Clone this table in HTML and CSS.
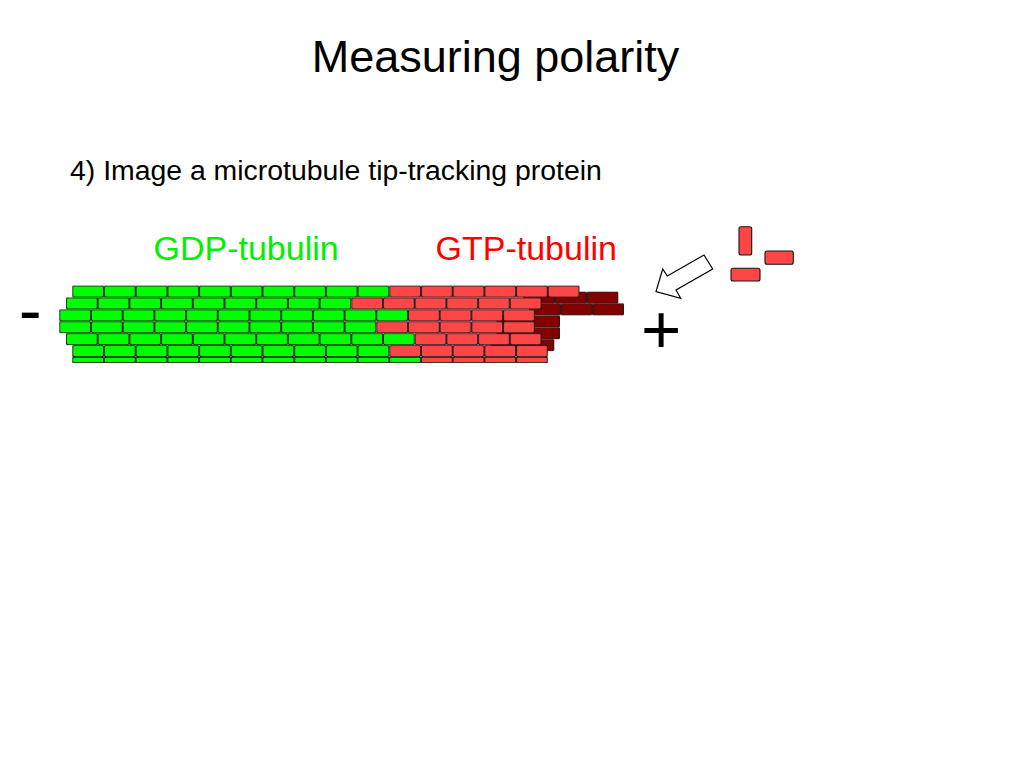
FILE: index.html
```html
<!DOCTYPE html>
<html lang="en">
<head>
<meta charset="utf-8">
<title>Measuring polarity</title>
<link rel="stylesheet" href="styles.css">
</head>
<body>
<main class="slide">
  <h1 class="title">Measuring polarity</h1>
  <p class="point">4) Image a microtubule tip-tracking protein</p>
  <svg class="diagram" width="1024" height="180" viewBox="0 200 1024 180" xmlns="http://www.w3.org/2000/svg">
    <defs>
      <pattern id="pg" patternUnits="userSpaceOnUse" width="31.7" height="11.9">
        <rect class="brick brick-gdp" x="0.3" y="0.3" width="31.1" height="11.3" rx="2"/>
      </pattern>
      <pattern id="pr" patternUnits="userSpaceOnUse" width="31.7" height="11.9">
        <rect class="brick brick-gtp" x="0.3" y="0.3" width="31.1" height="11.3" rx="2"/>
      </pattern>
      <pattern id="pd" patternUnits="userSpaceOnUse" width="31.7" height="11.9">
        <rect class="brick brick-back" x="0.3" y="0.3" width="31.1" height="11.3" rx="2"/>
      </pattern>
      <pattern id="pg6" patternUnits="userSpaceOnUse" width="31.7" height="6">
        <rect class="brick brick-gdp" x="0.3" y="0.3" width="31.1" height="5.4" rx="1.5"/>
      </pattern>
      <pattern id="pr6" patternUnits="userSpaceOnUse" width="31.7" height="6">
        <rect class="brick brick-gtp" x="0.3" y="0.3" width="31.1" height="5.4" rx="1.5"/>
      </pattern>
    </defs>

    <text class="label label-gdp" x="153.5" y="260">GDP-tubulin</text>
    <text class="label label-gtp" x="435.5" y="260">GTP-tubulin</text>
    <text class="end" x="18.7" y="334">-</text>
    <text class="end" x="641.1" y="353">+</text>

    <!-- back (dark) rows of the GTP cap -->
    <g transform="translate(523.2,291.7)"><rect fill="url(#pd)" width="95.1" height="11.9"/></g>
    <g transform="translate(528.9,303.4)"><rect fill="url(#pd)" width="95.1" height="11.9"/></g>
    <g transform="translate(496.6,315.4)"><rect fill="url(#pd)" width="63.4" height="11.9"/></g>
    <g transform="translate(496.6,327.3)"><rect fill="url(#pd)" width="63.4" height="11.9"/></g>
    <g transform="translate(490.9,339.2)"><rect fill="url(#pd)" width="63.4" height="11.9"/></g>

    <!-- front rows -->
    <g transform="translate(72.3,285.6)"><rect fill="url(#pg)" width="317" height="11.9"/><rect fill="url(#pr)" x="317" width="190.2" height="11.9"/></g>
    <g transform="translate(66,297.5)"><rect fill="url(#pg)" width="285.3" height="11.9"/><rect fill="url(#pr)" x="285.3" width="190.2" height="11.9"/></g>
    <g transform="translate(59.3,309.4)"><rect fill="url(#pg)" width="348.7" height="11.9"/><rect fill="url(#pr)" x="348.7" width="126.8" height="11.9"/></g>
    <g transform="translate(59.3,321.3)"><rect fill="url(#pg)" width="317" height="11.9"/><rect fill="url(#pr)" x="317" width="158.5" height="11.9"/></g>
    <g transform="translate(66,333.2)"><rect fill="url(#pg)" width="348.7" height="11.9"/><rect fill="url(#pr)" x="348.7" width="126.8" height="11.9"/></g>
    <g transform="translate(72.3,345.1)"><rect fill="url(#pg)" width="317" height="11.9"/><rect fill="url(#pr)" x="317" width="158.5" height="11.9"/></g>
    <g transform="translate(72.3,357)"><rect fill="url(#pg6)" width="348.7" height="6"/><rect fill="url(#pr6)" x="348.7" width="126.8" height="6"/></g>

    <!-- incoming arrow -->
    <polygon class="arrow" points="656,291.7 662.7,269 667.3,276 704,255 712.7,269 676,290 680.7,298.3"/>

    <!-- free GTP-tubulin dimers -->
    <rect class="brick brick-gtp" x="739" y="226.7" width="12.7" height="28.3" rx="2"/>
    <rect class="brick brick-gtp" x="765" y="251" width="28.3" height="13.3" rx="2"/>
    <rect class="brick brick-gtp" x="731" y="268.3" width="29" height="12.7" rx="2"/>
  </svg>
</main>
</body>
</html>
```

FILE: styles.css
```css
html, body {
  margin: 0;
  padding: 0;
  background: #ffffff;
}

body {
  font-family: "Liberation Sans", Arial, sans-serif;
  color: #000000;
}

.slide {
  width: 1024px;
  height: 768px;
  box-sizing: border-box;
  padding-top: 31px;
  overflow: hidden;
}

.title {
  margin: 0;
  padding-right: 33px;
  font-size: 45px;
  font-weight: normal;
  line-height: 52px;
  text-align: center;
}

.point {
  margin: 71px 0 0 70px;
  font-size: 28.4px;
  line-height: 32px;
}

.diagram {
  display: block;
  margin-top: 14px;
}

.brick {
  stroke: #141414;
  stroke-width: 1.1;
}

.brick-gdp {
  fill: #00ff00;
}

.brick-gtp {
  fill: #ff4646;
}

.brick-back {
  fill: #820000;
}

.label {
  font-family: "Liberation Sans", Arial, sans-serif;
  font-size: 34px;
}

.label-gdp {
  fill: #00f000;
}

.label-gtp {
  fill: #ff0000;
}

.end {
  font-family: "Liberation Sans", Arial, sans-serif;
  font-size: 69px;
  fill: #000000;
}

.arrow {
  fill: #ffffff;
  stroke: #000000;
  stroke-width: 1.2;
  stroke-linejoin: miter;
}
```
